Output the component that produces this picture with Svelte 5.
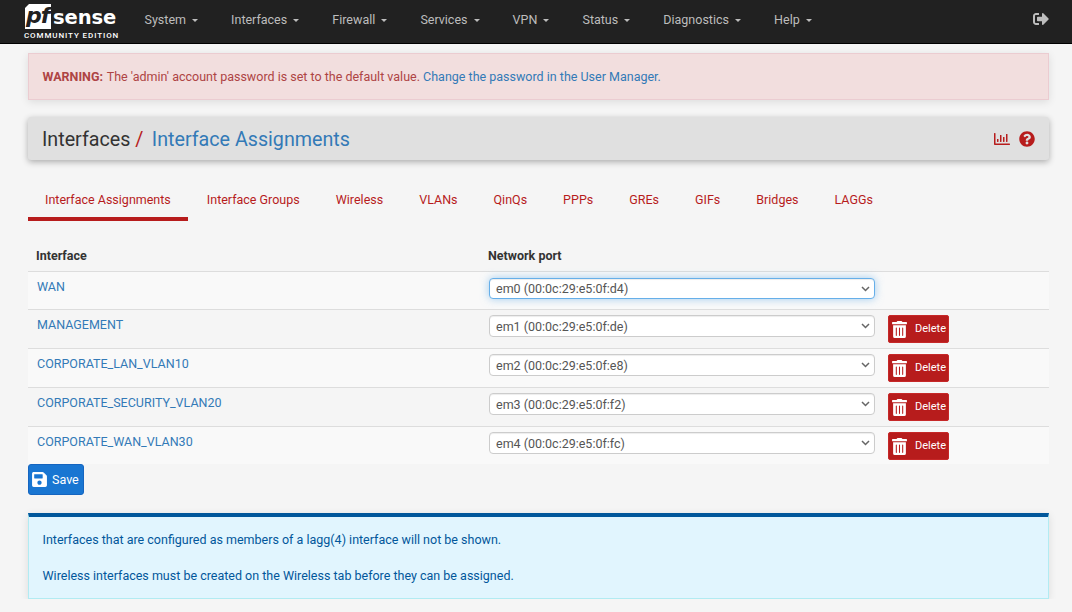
<script>
  const nav = ['System', 'Interfaces', 'Firewall', 'Services', 'VPN', 'Status', 'Diagnostics', 'Help'];
  const tabs = ['Interface Assignments', 'Interface Groups', 'Wireless', 'VLANs', 'QinQs', 'PPPs', 'GREs', 'GIFs', 'Bridges', 'LAGGs'];
  const rows = [
    { name: 'WAN', port: 'em0 (00:0c:29:e5:0f:d4)', del: false, focus: true, short: true },
    { name: 'MANAGEMENT', port: 'em1 (00:0c:29:e5:0f:de)', del: true },
    { name: 'CORPORATE_LAN_VLAN10', port: 'em2 (00:0c:29:e5:0f:e8)', del: true },
    { name: 'CORPORATE_SECURITY_VLAN20', port: 'em3 (00:0c:29:e5:0f:f2)', del: true },
    { name: 'CORPORATE_WAN_VLAN30', port: 'em4 (00:0c:29:e5:0f:fc)', del: true, short: true }
  ];
</script>

<header class="navbar">
  <div class="logo">
    <div class="logo-top"><span class="pf"><span>pf</span></span><span class="sense">sense</span></div>
    <div class="edition">COMMUNITY EDITION</div>
  </div>
  <nav class="menu">
    {#each nav as item}
      <a href="#top" class="menu-item">{item} <span class="caret"></span></a>
    {/each}
  </nav>
  <svg class="logout" viewBox="0 0 512 512" aria-hidden="true"><path d="M497 273L329 441c-15 15-41 4.5-41-17v-96H152c-13.3 0-24-10.7-24-24v-96c0-13.3 10.7-24 24-24h136V88c0-21.4 25.9-32 41-17l168 168c9.3 9.4 9.3 24.6 0 34zM192 436v-40c0-6.6-5.4-12-12-12H96c-17.7 0-32-14.3-32-32V160c0-17.7 14.3-32 32-32h84c6.6 0 12-5.4 12-12V76c0-6.6-5.4-12-12-12H96c-53 0-96 43-96 96v192c0 53 43 96 96 96h84c6.6 0 12-5.4 12-12z"/></svg>
</header>

<main class="page">
  <div class="alert danger"><strong>WARNING:</strong> The 'admin' account password is set to the default value. <a href="#top">Change the password in the User Manager.</a></div>

  <div class="crumbs">
    <h1>Interfaces <span class="slash">/</span> <a href="#top">Interface Assignments</a></h1>
    <div class="crumb-icons">
      <svg class="chart" viewBox="0 0 512 512" aria-hidden="true"><path d="M396.8 352h22.4c6.4 0 12.8-6.4 12.8-12.8V108.8c0-6.4-6.4-12.8-12.8-12.8h-22.4c-6.4 0-12.8 6.4-12.8 12.8v230.4c0 6.4 6.4 12.8 12.8 12.8zm-192 0h22.4c6.4 0 12.8-6.4 12.8-12.8V140.8c0-6.4-6.4-12.8-12.8-12.8h-22.4c-6.4 0-12.8 6.4-12.8 12.8v198.4c0 6.4 6.4 12.8 12.8 12.8zm96 0h22.4c6.4 0 12.8-6.4 12.8-12.8V204.8c0-6.4-6.4-12.8-12.8-12.8h-22.4c-6.4 0-12.8 6.4-12.8 12.8v134.4c0 6.4 6.4 12.8 12.8 12.8zM496 400H48V80c0-8.84-7.16-16-16-16H16C7.16 64 0 71.16 0 80v336c0 17.67 14.33 32 32 32h464c8.84 0 16-7.16 16-16v-16c0-8.84-7.16-16-16-16zm-387.2-48h22.4c6.4 0 12.8-6.4 12.8-12.8v-70.4c0-6.4-6.4-12.8-12.8-12.8h-22.4c-6.4 0-12.8 6.4-12.8 12.8v70.4c0 6.4 6.4 12.8 12.8 12.8z"/></svg>
      <svg class="help" viewBox="0 0 512 512" aria-hidden="true"><path d="M504 256c0 136.997-111.043 248-248 248S8 392.997 8 256C8 119.083 119.043 8 256 8s248 111.083 248 248zM262.655 90c-54.497 0-89.255 22.957-116.549 63.758-3.536 5.286-2.353 12.415 2.715 16.258l34.699 26.31c5.205 3.947 12.621 3.008 16.665-2.122 17.864-22.658 30.113-35.797 57.303-35.797 20.429 0 45.698 13.148 45.698 32.958 0 14.976-12.363 22.667-32.534 33.976C247.128 238.528 216 254.941 216 296v4c0 6.627 5.373 12 12 12h56c6.627 0 12-5.373 12-12v-1.333c0-28.462 83.186-29.647 83.186-106.667 0-58.002-60.165-102-116.531-102zM256 338c-25.365 0-46 20.635-46 46 0 25.364 20.635 46 46 46s46-20.636 46-46c0-25.365-20.635-46-46-46z"/></svg>
    </div>
  </div>

  <ul class="tabs">
    {#each tabs as tab, i}
      <li class:active={i === 0}><a href="#top">{tab}</a></li>
    {/each}
  </ul>

  <div class="table">
    <div class="row head">
      <div>Interface</div>
      <div>Network port</div>
    </div>
    {#each rows as r, i}
      <div class="row body" class:odd={i % 2 === 0} class:short={r.short}>
        <a href="#top" class="iface">{r.name}</a>
        <div class="port">
          <select class:focused={r.focus}><option>{r.port}</option></select>
          {#if r.del}
            <button class="del" type="button">
              <svg viewBox="0 0 448 512" aria-hidden="true"><path d="M32 464a48 48 0 0 0 48 48h288a48 48 0 0 0 48-48V128H32zm272-256a16 16 0 0 1 32 0v224a16 16 0 0 1-32 0zm-96 0a16 16 0 0 1 32 0v224a16 16 0 0 1-32 0zm-96 0a16 16 0 0 1 32 0v224a16 16 0 0 1-32 0zM432 32H312l-9.4-18.7A24 24 0 0 0 281.1 0H166.8a23.72 23.72 0 0 0-21.4 13.3L136 32H16A16 16 0 0 0 0 48v32a16 16 0 0 0 16 16h416a16 16 0 0 0 16-16V48a16 16 0 0 0-16-16z"/></svg>
              <span>Delete</span>
            </button>
          {/if}
        </div>
      </div>
    {/each}
  </div>

  <button class="save" type="button">
    <svg viewBox="0 0 448 512" aria-hidden="true"><path d="M433.941 129.941l-83.882-83.882A48 48 0 0 0 316.118 32H48C21.49 32 0 53.49 0 80v352c0 26.51 21.49 48 48 48h352c26.51 0 48-21.49 48-48V163.882a48 48 0 0 0-14.059-33.941zM224 416c-35.346 0-64-28.654-64-64 0-35.346 28.654-64 64-64s64 28.654 64 64c0 35.346-28.654 64-64 64zm96-304.52V212c0 6.627-5.373 12-12 12H76c-6.627 0-12-5.373-12-12V108c0-6.627 5.373-12 12-12h228.52c3.183 0 6.235 1.264 8.485 3.515l3.48 3.48A11.996 11.996 0 0 1 320 111.48z"/></svg>
    <span>Save</span>
  </button>

  <div class="alert info">
    <p>Interfaces that are configured as members of a lagg(4) interface will not be shown.</p>
    <p>Wireless interfaces must be created on the Wireless tab before they can be assigned.</p>
  </div>
</main>

<style>
  :global(body) {
    margin: 0;
    background: #f5f5f5;
    font-family: Roboto, "Liberation Sans", sans-serif;
    font-size: 12.5px;
    line-height: 18px;
    color: #333;
  }
  a { text-decoration: none; color: #337ab7; }

  .navbar {
    height: 43px;
    background: #212121;
    border-bottom: 1px solid #000;
    display: flex;
    align-items: center;
    padding: 0 23px 0 24px;
    box-sizing: content-box;
  }
  .logo { width: 96px; color: #fff; flex: none; }
  .logo-top { display: flex; align-items: flex-end; height: 26px; margin-top: 1px; }
  .pf {
    display: block; position: relative; width: 26px; height: 25px; margin-left: 1px; flex: none;
    color: #212121;
  }
  .pf::before {
    content: ""; position: absolute; inset: 0; background: #fff;
    clip-path: polygon(0 4px, 4px 0, 100% 0, 100% 100%, 0 100%);
  }
  .pf span { display: block; position: relative; font: italic 700 22px/24px "DejaVu Sans", sans-serif; letter-spacing: -1px; padding-left: 1px; }
  .sense { font: 700 19.5px/23px "DejaVu Sans", sans-serif; margin-left: 2px; letter-spacing: -0.1px; }
  .edition { font: 500 8px/10px Roboto, sans-serif; letter-spacing: 0.9px; white-space: nowrap; margin: 2px 0 0 0; }
  .menu { display: flex; margin: -4px 0 0 24.5px; flex: 1; }
  .menu-item { color: #bdbdbd; margin-right: 33px; white-space: nowrap; }
  .caret {
    display: inline-block; width: 0; height: 0; vertical-align: middle; margin-left: 3px;
    border-top: 3px solid #bdbdbd; border-left: 3px solid transparent; border-right: 3px solid transparent;
  }
  .logout { width: 16px; height: 16px; fill: #bdbdbd; margin-top: -5px; }

  .page { padding: 9px 23px 0 28px; }
  .alert { box-sizing: border-box; box-shadow: 0 2px 8px rgba(0,0,0,.1); }
  .danger {
    height: 47px; background: #f2dede; border: 1px solid #ebccd1; color: #ae4444;
    padding: 14px 13.5px;
  }
  .danger strong { margin-right: 1px; }
  .crumbs {
    margin-top: 17px; height: 43px; background: #e0e0e0; border-radius: 3px;
    box-shadow: 0 2px 6px rgba(0,0,0,.3);
    display: flex; align-items: center; justify-content: space-between;
    padding: 0 14px;
  }
  h1 { margin: 2px 0 0; font-size: 19.7px; font-weight: 400; line-height: 24px; color: #333; white-space: pre-wrap; }
  .slash { color: #b71c1c; margin-right: 3.5px; }
  .crumb-icons { display: flex; align-items: center; gap: 9px; }
  .chart { width: 16px; height: 16px; fill: #b71c1c; }
  .help { width: 16px; height: 16px; fill: #b71c1c; }

  .tabs { list-style: none; margin: 17px 0 0; padding: 0; display: flex; gap: 2px; }
  .tabs a { display: block; height: 44px; box-sizing: border-box; padding: 14px 17px 0; color: #b71c1c; }
  .tabs .active a { border-bottom: 4px solid #b71c1c; }

  .table { margin-top: 19px; }
  .row { display: grid; grid-template-columns: 452px 1fr; box-sizing: border-box; }
  .head { height: 31px; padding-top: 7px; font-weight: 700; font-size: 12.5px; }
  .head div { padding-left: 8px; }
  .body { border-top: 1px solid #ddd; height: 39px; }
  .body.short { height: 38px; }
  .odd { background: #f9f9f9; }
  .iface { padding: 6px 0 0 9px; }
  .port { display: flex; align-items: flex-start; padding: 5px 0 0 9px; }
  select {
    appearance: none;
    width: 386px; height: 22px; box-sizing: border-box; border: 1px solid #ccc; border-radius: 4px;
    background: #fff url("data:image/svg+xml,%3Csvg xmlns='http://www.w3.org/2000/svg' width='9' height='6'%3E%3Cpath d='M1 1l3.5 3.5L8 1' fill='none' stroke='%23666' stroke-width='1.5'/%3E%3C/svg%3E") no-repeat right 4px center;
    color: #555; font: 12.5px Roboto, sans-serif; padding: 0 6px;
    box-shadow: inset 0 1px 1px rgba(0,0,0,.075);
  }
  .focused {
    margin-top: 1px; height: 21px;
    border-color: #66afe9; box-shadow: inset 0 1px 1px rgba(0,0,0,.075), 0 0 8px rgba(102,175,233,.6);
  }
  .del {
    margin: 0 0 0 13px; width: 61px; height: 28px; box-sizing: border-box;
    background: #b71c1c; border: 1px solid #c62828; border-radius: 2px; color: #fff;
    display: flex; align-items: center; padding: 0 0 0 3px; font: 11px Roboto, sans-serif;
  }
  .del svg { width: 15px; height: 17px; fill: #fff; margin-right: 8px; }
  .del span { margin-top: -2px; }

  .save {
    display: flex; align-items: center; width: 56px; height: 31px; box-sizing: border-box;
    background: #1976d2; border: 1px solid #1565c0; border-radius: 3px; color: #fff;
    padding: 0 0 0 3px; font: 12.5px Roboto, sans-serif;
  }
  .save svg { width: 15px; height: 17px; fill: #fff; margin-right: 5px; }

  .info {
    margin-top: 18px; height: 86px;
    background: #e1f5fe; border: 1px solid #b2ebf2; border-top: 4px solid #01579b;
    color: #01579b; padding: 14px 13.5px;
  }
  .info p { margin: 0 0 18px; }
</style>
